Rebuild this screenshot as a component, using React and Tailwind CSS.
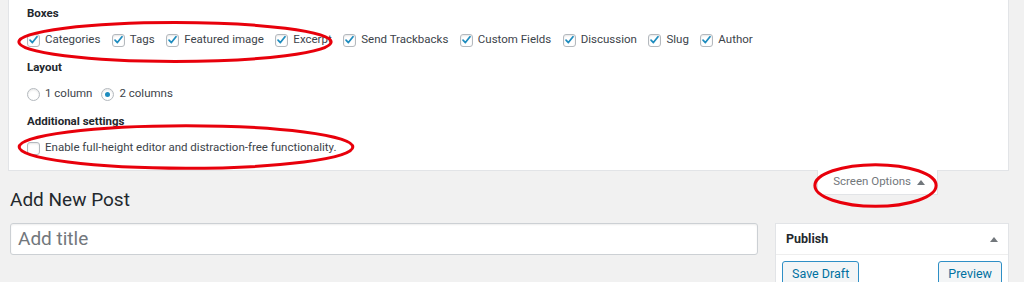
import { useState } from 'react'

const BOXES = [
  'Categories',
  'Tags',
  'Featured image',
  'Excerpt',
  'Send Trackbacks',
  'Custom Fields',
  'Discussion',
  'Slug',
  'Author',
]

function Check({ checked }) {
  return (
    <span className="w-[13px] h-[13px] shrink-0 rounded-[3px] border border-[#b4b9be] bg-white shadow-[inset_0_1px_2px_rgba(0,0,0,0.1)] flex items-center justify-center">
      {checked && (
        <svg width="12" height="12" viewBox="0 0 12 12">
          <path d="M2.2 6.2 L4.8 8.8 L9.8 2.4" fill="none" stroke="#1e8cbe" strokeWidth="1.9" strokeLinecap="round" strokeLinejoin="round" />
        </svg>
      )}
    </span>
  )
}

function Radio({ checked }) {
  return (
    <span className="w-[13px] h-[13px] shrink-0 rounded-full border border-[#b4b9be] bg-white shadow-[inset_0_1px_2px_rgba(0,0,0,0.1)] flex items-center justify-center">
      {checked && <span className="w-[5px] h-[5px] rounded-full bg-[#1e8cbe]" />}
    </span>
  )
}

// red hand-drawn annotation rings
function Ring({ className }) {
  return (
    <svg className={`absolute pointer-events-none ${className}`} viewBox="0 0 100 40" preserveAspectRatio="none">
      <ellipse cx="50" cy="20" rx="48.5" ry="18.5" fill="none" stroke="#e8000b" strokeWidth="3" vectorEffect="non-scaling-stroke" />
    </svg>
  )
}

export default function App() {
  const [boxes] = useState(BOXES)

  return (
    <div className="relative w-[1024px] h-[282px] overflow-hidden bg-[#f1f1f1] text-[#3c434a] font-['Roboto',sans-serif]">
      {/* Screen options panel */}
      <div className="ml-2 mr-[15px] bg-white border-x border-b border-[#e2e4e7] pl-[18px] pt-[5px] h-[171px]">
        <p className="text-[11.5px] font-bold text-[#23282d] leading-[16px]">Boxes</p>
        <div className="flex items-center gap-[11.5px] mt-[11px] h-[16px] text-[11.5px]">
          {boxes.map(b => (
            <label key={b} className="flex items-center gap-[5px] whitespace-nowrap">
              <Check checked />
              <span>{b}</span>
            </label>
          ))}
        </div>
        <p className="text-[11.5px] font-bold text-[#23282d] leading-[16px] mt-[11px]">Layout</p>
        <div className="flex items-center gap-[9px] mt-[11px] h-[16px] text-[11.5px]">
          <label className="flex items-center gap-[5px]"><Radio /><span>1 column</span></label>
          <label className="flex items-center gap-[5px]"><Radio checked /><span>2 columns</span></label>
        </div>
        <p className="text-[11.5px] font-bold text-[#23282d] leading-[16px] mt-[11px]">Additional settings</p>
        <label className="flex items-center gap-[5px] mt-[11px] h-[16px] text-[11.5px]">
          <Check />
          <span>Enable full-height editor and distraction-free functionality.</span>
        </label>
      </div>

      {/* heading + screen options tab */}
      <div className="flex items-start justify-between pl-[10px] pr-[86px]">
        <h1 className="pt-[17px] text-[19px] leading-[24px] text-[#23282d]">Add New Post</h1>
        <div className="-mt-px h-[25px] pl-[15px] pr-[12px] bg-white border-x border-b border-[#e2e4e7] flex items-center gap-[6px] text-[11.5px] text-[#72777c]">
          <span>Screen Options</span>
          <svg width="8" height="6" viewBox="0 0 8 6"><path d="M0 6 L4 1 L8 6 Z" fill="#72777c" /></svg>
        </div>
      </div>

      {/* editor row */}
      <div className="flex items-start gap-[17px] pl-[10px] pr-[15px] mt-[11px]">
        <div className="w-[748px] h-[32px] bg-white border border-[#ccd0d4] rounded-[3px] shadow-[inset_0_1px_2px_rgba(0,0,0,0.07)] flex items-center px-[7px] text-[19px] text-[#72777c]">
          Add title
        </div>
        <div className="flex-1 bg-white border border-[#e2e4e7]">
          <div className="h-[31px] px-[10px] flex items-center justify-between border-b border-[#eee]">
            <span className="text-[12.5px] font-bold text-[#23282d]">Publish</span>
            <svg width="8" height="6" viewBox="0 0 8 6"><path d="M0 6 L4 1 L8 6 Z" fill="#72777c" /></svg>
          </div>
          <div className="flex justify-between px-[6px] pt-[6px] pb-[10px]">
            <button className="h-[26px] px-[9px] border border-[#2e8fc6] rounded-[3px] bg-[#f3f5f6] text-[12.5px] text-[#0071a1]">Save Draft</button>
            <button className="h-[26px] px-[9px] border border-[#2e8fc6] rounded-[3px] bg-[#f3f5f6] text-[12.5px] text-[#0071a1]">Preview</button>
          </div>
        </div>
      </div>

      <Ring className="left-[14px] top-[21px] w-[322px] h-[42px]" />
      <Ring className="left-[14px] top-[124px] w-[344px] h-[46px]" />
      <Ring className="left-[813px] top-[163px] w-[125px] h-[45px]" />
    </div>
  )
}
